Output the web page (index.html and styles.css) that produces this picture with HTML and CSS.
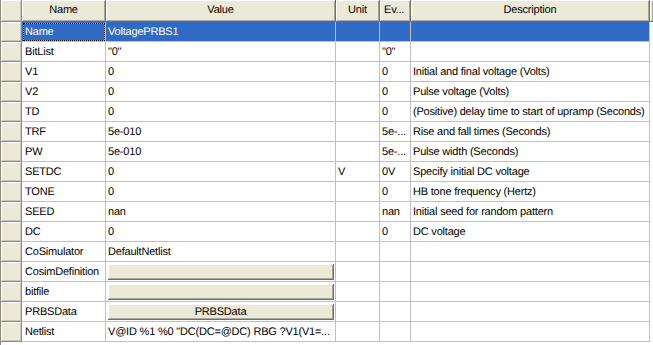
FILE: index.html
```html
<!DOCTYPE html>
<html>
<head>
<meta charset="utf-8">
<link rel="stylesheet" href="styles.css">
</head>
<body>
<div class="grid">
  <div class="row head">
    <div class="rh"></div>
    <div class="hc">Name</div>
    <div class="hc">Value</div>
    <div class="hc">Unit</div>
    <div class="hc left">Ev...</div>
    <div class="hc">Description</div>
    <div class="hc fill"></div>
  </div>
  <div class="row sel">
    <div class="rh"></div>
    <div class="c name focus">Name</div>
    <div class="c">VoltagePRBS1</div>
    <div class="c"></div>
    <div class="c"></div>
    <div class="c"></div>
    <div class="c fill"></div>
  </div>
  <div class="row">
    <div class="rh"></div>
    <div class="c name">BitList</div>
    <div class="c">"0"</div>
    <div class="c"></div>
    <div class="c">"0"</div>
    <div class="c"></div>
    <div class="c fill"></div>
  </div>
  <div class="row">
    <div class="rh"></div>
    <div class="c name">V1</div>
    <div class="c">0</div>
    <div class="c"></div>
    <div class="c">0</div>
    <div class="c">Initial and final voltage (Volts)</div>
    <div class="c fill"></div>
  </div>
  <div class="row">
    <div class="rh"></div>
    <div class="c name">V2</div>
    <div class="c">0</div>
    <div class="c"></div>
    <div class="c">0</div>
    <div class="c">Pulse voltage (Volts)</div>
    <div class="c fill"></div>
  </div>
  <div class="row">
    <div class="rh"></div>
    <div class="c name">TD</div>
    <div class="c">0</div>
    <div class="c"></div>
    <div class="c">0</div>
    <div class="c">(Positive) delay time to start of upramp (Seconds)</div>
    <div class="c fill"></div>
  </div>
  <div class="row">
    <div class="rh"></div>
    <div class="c name">TRF</div>
    <div class="c">5e-010</div>
    <div class="c"></div>
    <div class="c">5e-...</div>
    <div class="c">Rise and fall times (Seconds)</div>
    <div class="c fill"></div>
  </div>
  <div class="row">
    <div class="rh"></div>
    <div class="c name">PW</div>
    <div class="c">5e-010</div>
    <div class="c"></div>
    <div class="c">5e-...</div>
    <div class="c">Pulse width (Seconds)</div>
    <div class="c fill"></div>
  </div>
  <div class="row">
    <div class="rh"></div>
    <div class="c name">SETDC</div>
    <div class="c">0</div>
    <div class="c">V</div>
    <div class="c">0V</div>
    <div class="c">Specify initial DC voltage</div>
    <div class="c fill"></div>
  </div>
  <div class="row">
    <div class="rh"></div>
    <div class="c name">TONE</div>
    <div class="c">0</div>
    <div class="c"></div>
    <div class="c">0</div>
    <div class="c">HB tone frequency (Hertz)</div>
    <div class="c fill"></div>
  </div>
  <div class="row">
    <div class="rh"></div>
    <div class="c name">SEED</div>
    <div class="c">nan</div>
    <div class="c"></div>
    <div class="c">nan</div>
    <div class="c">Initial seed for random pattern</div>
    <div class="c fill"></div>
  </div>
  <div class="row">
    <div class="rh"></div>
    <div class="c name">DC</div>
    <div class="c">0</div>
    <div class="c"></div>
    <div class="c">0</div>
    <div class="c">DC voltage</div>
    <div class="c fill"></div>
  </div>
  <div class="row">
    <div class="rh"></div>
    <div class="c name">CoSimulator</div>
    <div class="c">DefaultNetlist</div>
    <div class="c"></div>
    <div class="c"></div>
    <div class="c"></div>
    <div class="c fill"></div>
  </div>
  <div class="row">
    <div class="rh"></div>
    <div class="c name">CosimDefinition</div>
    <div class="c btncell"><div class="btn"></div></div>
    <div class="c"></div>
    <div class="c"></div>
    <div class="c"></div>
    <div class="c fill"></div>
  </div>
  <div class="row">
    <div class="rh"></div>
    <div class="c name">bitfile</div>
    <div class="c btncell"><div class="btn"></div></div>
    <div class="c"></div>
    <div class="c"></div>
    <div class="c"></div>
    <div class="c fill"></div>
  </div>
  <div class="row">
    <div class="rh"></div>
    <div class="c name">PRBSData</div>
    <div class="c btncell"><div class="btn">PRBSData</div></div>
    <div class="c"></div>
    <div class="c"></div>
    <div class="c"></div>
    <div class="c fill"></div>
  </div>
  <div class="row">
    <div class="rh"></div>
    <div class="c name">Netlist</div>
    <div class="c">V@ID %1 %0 "DC(DC=@DC) RBG ?V1(V1=...</div>
    <div class="c"></div>
    <div class="c"></div>
    <div class="c"></div>
    <div class="c fill"></div>
  </div>
</div>
</body>
</html>
```

FILE: styles.css
```css
html, body {
  margin: 0;
  padding: 0;
  background: #ffffff;
}
body {
  width: 653px;
  height: 345px;
  overflow: hidden;
  font-family: "Liberation Sans", Arial, sans-serif;
  font-size: 11px;
  letter-spacing: -0.2px;
  text-rendering: geometricPrecision;
  color: #000;
}
.grid {
  border-left: 1px solid #8d8b80;
  height: 345px;
  box-sizing: border-box;
}
.row {
  display: grid;
  grid-template-columns: 21px 84px 230px 44px 31px 239px 1fr;
  height: 20px;
}
.row.head {
  height: 22px;
}
.rh {
  background: #ece9d8;
  box-sizing: border-box;
  border-right: 1px solid #8d8b80;
  border-bottom: 1px solid #8d8b80;
  box-shadow: inset 1px 1px #ffffff, inset -1px -1px #c9c5b3;
}
.hc {
  background: #ece9d8;
  box-sizing: border-box;
  border-right: 1px solid #716f64;
  border-bottom: 1px solid #716f64;
  box-shadow: inset 1px 1px #ffffff, inset -1px -1px #aca899;
  display: flex;
  align-items: center;
  justify-content: center;
  padding-bottom: 1px;
  white-space: nowrap;
  overflow: hidden;
}
.hc.left {
  justify-content: flex-start;
  padding-left: 4px;
}
.hc.fill {
  border-right: none;
}
.c {
  box-sizing: border-box;
  border-right: 1px solid #c0c0c0;
  border-bottom: 1px solid #c0c0c0;
  padding: 0 2px;
  display: flex;
  align-items: center;
  white-space: nowrap;
  overflow: hidden;
  position: relative;
}
.c.name {
  padding-left: 3px;
}
.c.fill {
  border-right: none;
  border-bottom: none;
}
.sel .c {
  background: #316ac5;
  color: #ffffff;
}
.sel .c.fill {
  background: #ffffff;
}
.focus::before,
.focus::after {
  content: "";
  position: absolute;
  left: 1px;
  top: 1px;
  right: 0;
  bottom: 0;
}
.focus::before {
  border: 1px solid #e9a234;
}
.focus::after {
  border: 1px dotted #000000;
}
.btncell {
  padding: 2px 1px 0 2px;
  align-items: stretch;
}
.btn {
  flex: 1;
  background: #ece9d8;
  border-right: 1px solid #716f64;
  border-bottom: 1px solid #716f64;
  box-shadow: inset 1px 1px #ffffff, inset -1px -1px #aca899;
  display: flex;
  align-items: center;
  justify-content: center;
  margin-bottom: 1px;
}
```
